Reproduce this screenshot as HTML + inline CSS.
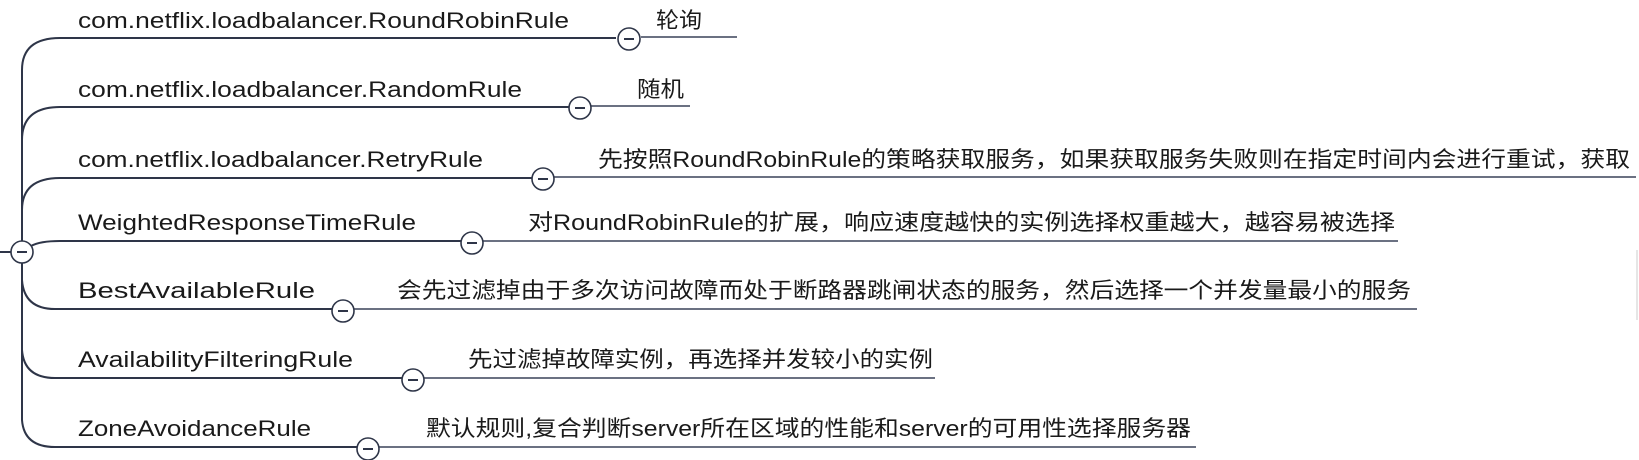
<!DOCTYPE html>
<html><head><meta charset="utf-8"><style>
html,body{margin:0;padding:0;background:#fff;width:1639px;height:460px;overflow:hidden}
text{font-family:"Liberation Sans","Noto Sans CJK SC",sans-serif;font-size:22px;fill:#1a1a1a}
</style></head><body>
<svg width="1639" height="460" xmlns="http://www.w3.org/2000/svg">
<g fill="none" stroke="#2e3548" stroke-width="2">
<line x1="0" y1="252" x2="11" y2="252"/>
<path d="M22,241 L22,70 Q22,38 60,38 L616,38"/>
<path d="M22,241 L22,140 Q22,107 60,107 L569,107"/>
<path d="M22,241 L22,210 Q22,178 60,178 L532,178"/>
<path d="M31,246 Q40,241 60,241 L461,241"/>
<path d="M22,263 L22,280 Q24,309 55,309 L332,309"/>
<path d="M22,263 L22,350 Q24,378 55,378 L402,378"/>
<path d="M22,263 L22,420 Q24,447 55,447 L357,447"/>
</g>
<g fill="none" stroke="#3a4258" stroke-width="1.6">
<line x1="641" y1="37" x2="737" y2="37"/>
<line x1="591" y1="106" x2="690" y2="106"/>
<line x1="554" y1="177" x2="1636" y2="177"/>
<line x1="483" y1="241" x2="1398" y2="241"/>
<line x1="354" y1="309" x2="1417" y2="309"/>
<line x1="424" y1="378" x2="935" y2="378"/>
<line x1="379" y1="447" x2="1196" y2="447"/>
</g>
<g fill="#fff" stroke="#2e3548" stroke-width="1.6">
<circle cx="22" cy="252" r="11"/>
<circle cx="629" cy="39" r="11"/>
<circle cx="580" cy="108" r="11"/>
<circle cx="543" cy="179" r="11"/>
<circle cx="472" cy="243" r="11"/>
<circle cx="343" cy="311" r="11"/>
<circle cx="413" cy="380" r="11"/>
<circle cx="368" cy="449" r="11"/>
</g>
<g stroke="#2e3548" stroke-width="2">
<line x1="17" y1="252" x2="27" y2="252"/>
<line x1="624" y1="39" x2="634" y2="39"/>
<line x1="575" y1="108" x2="585" y2="108"/>
<line x1="538" y1="179" x2="548" y2="179"/>
<line x1="467" y1="243" x2="477" y2="243"/>
<line x1="338" y1="311" x2="348" y2="311"/>
<line x1="408" y1="380" x2="418" y2="380"/>
<line x1="363" y1="449" x2="373" y2="449"/>
</g>
<line x1="1637" y1="250" x2="1637" y2="320" stroke="#ccc" stroke-width="1"/>
<text x="78" y="28" textLength="491" lengthAdjust="spacingAndGlyphs">com.netflix.loadbalancer.RoundRobinRule</text>
<text x="78" y="97" textLength="444" lengthAdjust="spacingAndGlyphs">com.netflix.loadbalancer.RandomRule</text>
<text x="78" y="167" textLength="405" lengthAdjust="spacingAndGlyphs">com.netflix.loadbalancer.RetryRule</text>
<text x="78" y="230" textLength="338" lengthAdjust="spacingAndGlyphs">WeightedResponseTimeRule</text>
<text x="78" y="298" textLength="237" lengthAdjust="spacingAndGlyphs">BestAvailableRule</text>
<text x="78" y="367" textLength="275" lengthAdjust="spacingAndGlyphs">AvailabilityFilteringRule</text>
<text x="78" y="436" textLength="233" lengthAdjust="spacingAndGlyphs">ZoneAvoidanceRule</text>
<text x="656" y="28" textLength="46" lengthAdjust="spacingAndGlyphs">轮询</text>
<text x="637" y="97" textLength="47" lengthAdjust="spacingAndGlyphs">随机</text>
<text x="598" y="167" textLength="1032" lengthAdjust="spacingAndGlyphs">先按照RoundRobinRule的策略获取服务，如果获取服务失败则在指定时间内会进行重试，获取</text>
<text x="528" y="230" textLength="867" lengthAdjust="spacingAndGlyphs">对RoundRobinRule的扩展，响应速度越快的实例选择权重越大，越容易被选择</text>
<text x="397" y="298" textLength="1014" lengthAdjust="spacingAndGlyphs">会先过滤掉由于多次访问故障而处于断路器跳闸状态的服务，然后选择一个并发量最小的服务</text>
<text x="468" y="367" textLength="465" lengthAdjust="spacingAndGlyphs">先过滤掉故障实例，再选择并发较小的实例</text>
<text x="426" y="436" textLength="765" lengthAdjust="spacingAndGlyphs">默认规则,复合判断server所在区域的性能和server的可用性选择服务器</text>
</svg>
</body></html>
